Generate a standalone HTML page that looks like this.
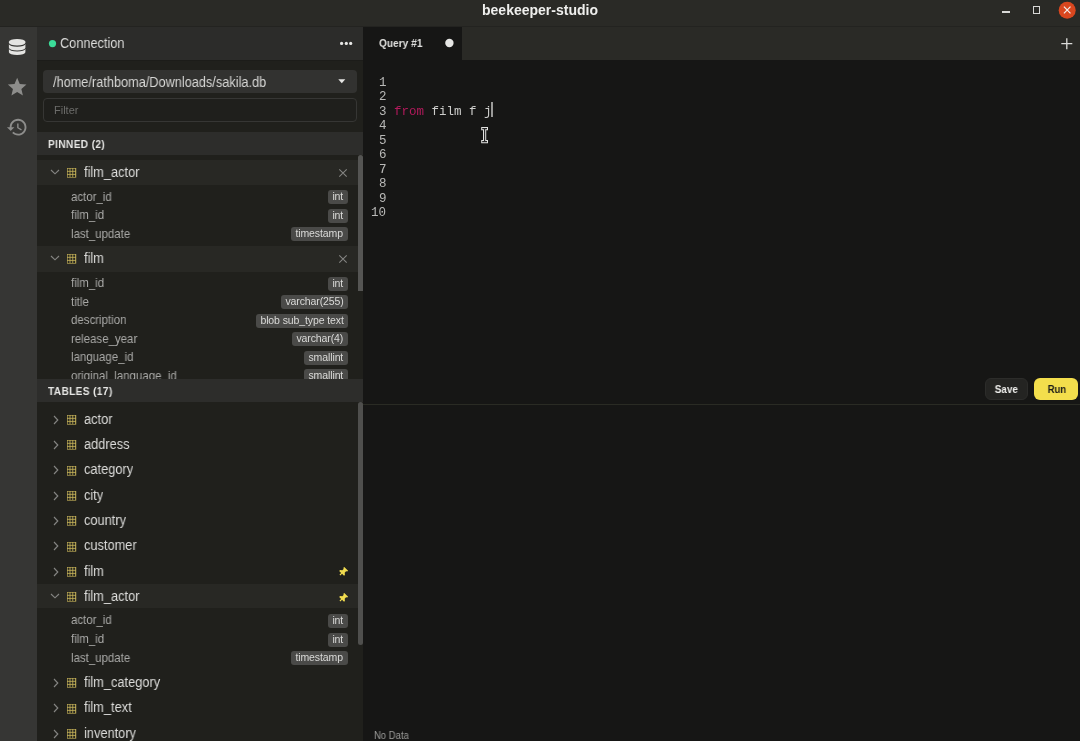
<!DOCTYPE html>
<html><head><meta charset="utf-8">
<style>
*{box-sizing:border-box;margin:0;padding:0}
html,body{width:1080px;height:741px;overflow:hidden;background:#171716;font-family:"Liberation Sans",sans-serif}
.a{position:absolute;white-space:pre}
.t{will-change:transform}
svg.a{overflow:visible}
</style></head><body>
<div class="a" style="left:0px;top:0px;width:1080px;height:27px;background:#2a2a26;"></div>
<div class="a" style="left:0px;top:26px;width:1080px;height:1px;background:#232320;"></div>
<div class="a t" style="left:390.00px;width:300px;top:1.05px;font-size:14px;line-height:18px;color:#efefed;font-weight:bold;font-family:'Liberation Sans',sans-serif;text-align:center;">beekeeper-studio</div>
<div class="a" style="left:1002px;top:11.3px;width:7.8px;height:1.6px;background:#d8d8d6;"></div>
<div class="a" style="left:1033px;top:6px;width:7.4px;height:8px;border:1.4px solid #d8d8d6"></div>
<svg class="a" style="left:1058px;top:1px" width="18" height="18" viewBox="0 0 18 18"><circle cx="9.2" cy="9.2" r="8.5" fill="#d9471f"/><path d="M5.9 5.7 L12.5 12.3 M12.5 5.7 L5.9 12.3" stroke="#f4f0ee" stroke-width="1.2"/></svg>
<div class="a" style="left:0px;top:27px;width:37px;height:714px;background:#363634;"></div>
<svg class="a" style="left:8px;top:38px" width="19" height="19" viewBox="0 0 19 19"><g fill="#e4e4e2"><path d="M0.9 3.7 A8.25 2.8 0 0 1 17.4 3.7 V4.8 A8.25 2.8 0 0 1 0.9 4.8 Z"/><path d="M0.9 5.9 A8.25 2.8 0 0 0 17.4 5.9 V9.7 A8.25 2.8 0 0 1 0.9 9.7 Z"/><path d="M0.9 10.8 A8.25 2.8 0 0 0 17.4 10.8 V14.2 A8.25 2.8 0 0 1 0.9 14.2 Z"/></g></svg>
<svg class="a" style="left:6.0px;top:75.6px" width="22" height="22" viewBox="0 0 22 22"><path transform="scale(0.93)" fill="#8d8d8b" d="M12 17.27L18.18 21l-1.64-7.03L22 9.24l-7.19-.61L12 2 9.19 8.63 2 9.24l5.46 4.73L5.82 21z"/></svg>
<svg class="a" style="left:6.4px;top:115.8px" width="22" height="22" viewBox="0 0 22 22"><path transform="scale(0.93)" fill="#8d8d8b" d="M13 3c-4.97 0-9 4.03-9 9H1l3.89 3.89.07.14L9 12H6c0-3.870 3.13-7 7-7s7 3.13 7 7-3.13 7-7 7c-1.93 0-3.68-.79-4.94-2.06l-1.42 1.42C8.27 19.99 10.51 21 13 21c4.97 0 9-4.03 9-9s-4.03-9-9-9zm-1 5v5l4.28 2.54.72-1.210-3.5-2.08V8H12z"/></svg>
<div class="a" style="left:37px;top:27px;width:326px;height:714px;background:#20201c;"></div>
<div class="a" style="left:37px;top:27px;width:326px;height:33px;background:#2c2c2a;"></div>
<div class="a" style="left:37px;top:60px;width:326px;height:1px;background:#1c1c19;"></div>
<svg class="a" style="left:48px;top:39px" width="9" height="9" viewBox="0 0 9 9"><circle cx="4.5" cy="4.6" r="3.6" fill="#3bdc98"/></svg>
<div class="a t" style="left:60.30px;top:34.15px;font-size:14px;line-height:18px;color:#dcdcda;font-weight:normal;font-family:'Liberation Sans',sans-serif;transform:scaleX(0.91);transform-origin:left 0;">Connection</div>
<svg class="a" style="left:338px;top:40px" width="16" height="8" viewBox="0 0 16 8"><g fill="#e8e8e6"><circle cx="3.6" cy="3.4" r="1.6"/><circle cx="8.3" cy="3.4" r="1.6"/><circle cx="12.7" cy="3.4" r="1.6"/></g></svg>
<div class="a" style="left:43px;top:70px;width:313.5px;height:23px;background:#323230;border-radius:4px;"></div>
<div class="a t" style="left:52.50px;top:72.55px;font-size:14px;line-height:18px;color:#d7d7d5;font-weight:normal;font-family:'Liberation Sans',sans-serif;transform:scaleX(0.91);transform-origin:left 0;">/home/rathboma/Downloads/sakila.db</div>
<svg class="a" style="left:337.5px;top:79px" width="8" height="5" viewBox="0 0 8 5"><path d="M0.3 0.3 L7.3 0.3 L3.8 4.2 Z" fill="#e6e6e4"/></svg>
<div class="a" style="left:43px;top:98.3px;width:313.5px;height:23.6px;border:1px solid #363634;border-radius:4px;background:#1f1f1c"></div>
<div class="a t" style="left:53.80px;top:102.99px;font-size:11px;line-height:14px;color:#6c6c6a;font-weight:normal;font-family:'Liberation Sans',sans-serif;">Filter</div>
<div class="a" style="left:37px;top:132px;width:326px;height:23px;background:#2d2d2b;"></div>
<div class="a t" style="left:47.60px;top:136.99px;font-size:11px;line-height:14px;color:#e6e6e4;font-weight:bold;font-family:'Liberation Sans',sans-serif;letter-spacing:0.4px;transform:scaleX(0.92);transform-origin:left 0;">PINNED (2)</div>
<div class="a" style="left:37px;top:155px;width:326px;height:224px;overflow:hidden">
<div class="a" style="left:-37px;top:-155px;width:1080px;height:741px">
<div class="a" style="left:37px;top:159.7px;width:321px;height:25.80000000000001px;background:#282824;"></div>
<svg class="a" style="left:50.1px;top:169.25px" width="10" height="6" viewBox="0 0 10 6"><path d="M1.0 1.0 L5 4.8 L9.0 1.0" fill="none" stroke="#858583" stroke-width="1.15"/></svg>
<svg class="a" style="left:67.0px;top:167.79999999999998px" width="10" height="10" viewBox="0 0 10 10"><rect x="0" y="0" width="9.2" height="9.6" fill="#c9b55a"/><g fill="#26261f"><rect x="0.60" y="0.60" width="2.0" height="2.27"/><rect x="0.60" y="3.67" width="2.0" height="2.27"/><rect x="0.60" y="6.74" width="2.0" height="2.27"/><rect x="3.40" y="0.60" width="2.0" height="2.27"/><rect x="3.40" y="3.67" width="2.0" height="2.27"/><rect x="3.40" y="6.74" width="2.0" height="2.27"/><rect x="6.20" y="0.60" width="2.0" height="2.27"/><rect x="6.20" y="3.67" width="2.0" height="2.27"/><rect x="6.20" y="6.74" width="2.0" height="2.27"/></g></svg>
<div class="a t" style="left:84.00px;top:162.65px;font-size:14px;line-height:18px;color:#dcdcda;font-weight:normal;font-family:'Liberation Sans',sans-serif;transform:scaleX(0.915);transform-origin:left 0;">film_actor</div>
<svg class="a" style="left:337.8px;top:167.7px" width="10" height="10" viewBox="0 0 10 10"><path d="M1.3 1.3 L8.7 8.7 M8.7 1.3 L1.3 8.7" stroke="#858583" stroke-width="1.05"/></svg>
<div class="a t" style="left:71.20px;top:188.77px;font-size:12.2px;line-height:16px;color:#a9a9a7;font-weight:normal;font-family:'Liberation Sans',sans-serif;transform:scaleX(0.94);transform-origin:left 0;">actor_id</div>
<div class="a t" style="right:732px;top:190.40px;height:13.6px;padding:0 4.6px 0 4.4px;background:#4a4a48;border-radius:3px;font-size:10.5px;line-height:13.6px;color:#dadad8;letter-spacing:-0.1px">int</div>
<div class="a t" style="left:71.20px;top:207.27px;font-size:12.2px;line-height:16px;color:#a9a9a7;font-weight:normal;font-family:'Liberation Sans',sans-serif;transform:scaleX(0.94);transform-origin:left 0;">film_id</div>
<div class="a t" style="right:732px;top:208.90px;height:13.6px;padding:0 4.6px 0 4.4px;background:#4a4a48;border-radius:3px;font-size:10.5px;line-height:13.6px;color:#dadad8;letter-spacing:-0.1px">int</div>
<div class="a t" style="left:71.20px;top:225.77px;font-size:12.2px;line-height:16px;color:#a9a9a7;font-weight:normal;font-family:'Liberation Sans',sans-serif;transform:scaleX(0.94);transform-origin:left 0;">last_update</div>
<div class="a t" style="right:732px;top:227.40px;height:13.6px;padding:0 4.6px 0 4.4px;background:#4a4a48;border-radius:3px;font-size:10.5px;line-height:13.6px;color:#dadad8;letter-spacing:-0.1px">timestamp</div>
<div class="a" style="left:37px;top:246px;width:321px;height:25.5px;background:#282824;"></div>
<svg class="a" style="left:50.1px;top:255.14999999999998px" width="10" height="6" viewBox="0 0 10 6"><path d="M1.0 1.0 L5 4.8 L9.0 1.0" fill="none" stroke="#858583" stroke-width="1.15"/></svg>
<svg class="a" style="left:67.0px;top:253.7px" width="10" height="10" viewBox="0 0 10 10"><rect x="0" y="0" width="9.2" height="9.6" fill="#c9b55a"/><g fill="#26261f"><rect x="0.60" y="0.60" width="2.0" height="2.27"/><rect x="0.60" y="3.67" width="2.0" height="2.27"/><rect x="0.60" y="6.74" width="2.0" height="2.27"/><rect x="3.40" y="0.60" width="2.0" height="2.27"/><rect x="3.40" y="3.67" width="2.0" height="2.27"/><rect x="3.40" y="6.74" width="2.0" height="2.27"/><rect x="6.20" y="0.60" width="2.0" height="2.27"/><rect x="6.20" y="3.67" width="2.0" height="2.27"/><rect x="6.20" y="6.74" width="2.0" height="2.27"/></g></svg>
<div class="a t" style="left:84.00px;top:248.55px;font-size:14px;line-height:18px;color:#dcdcda;font-weight:normal;font-family:'Liberation Sans',sans-serif;transform:scaleX(0.915);transform-origin:left 0;">film</div>
<svg class="a" style="left:337.8px;top:253.59999999999997px" width="10" height="10" viewBox="0 0 10 10"><path d="M1.3 1.3 L8.7 8.7 M8.7 1.3 L1.3 8.7" stroke="#858583" stroke-width="1.05"/></svg>
<div class="a t" style="left:71.20px;top:275.17px;font-size:12.2px;line-height:16px;color:#a9a9a7;font-weight:normal;font-family:'Liberation Sans',sans-serif;transform:scaleX(0.94);transform-origin:left 0;">film_id</div>
<div class="a t" style="right:732px;top:276.80px;height:13.6px;padding:0 4.6px 0 4.4px;background:#4a4a48;border-radius:3px;font-size:10.5px;line-height:13.6px;color:#dadad8;letter-spacing:-0.1px">int</div>
<div class="a t" style="left:71.20px;top:293.67px;font-size:12.2px;line-height:16px;color:#a9a9a7;font-weight:normal;font-family:'Liberation Sans',sans-serif;transform:scaleX(0.94);transform-origin:left 0;">title</div>
<div class="a t" style="right:732px;top:295.30px;height:13.6px;padding:0 4.6px 0 4.4px;background:#4a4a48;border-radius:3px;font-size:10.5px;line-height:13.6px;color:#dadad8;letter-spacing:-0.1px">varchar(255)</div>
<div class="a t" style="left:71.20px;top:312.17px;font-size:12.2px;line-height:16px;color:#a9a9a7;font-weight:normal;font-family:'Liberation Sans',sans-serif;transform:scaleX(0.94);transform-origin:left 0;">description</div>
<div class="a t" style="right:732px;top:313.80px;height:13.6px;padding:0 4.6px 0 4.4px;background:#4a4a48;border-radius:3px;font-size:10.5px;line-height:13.6px;color:#dadad8;letter-spacing:-0.1px">blob sub_type text</div>
<div class="a t" style="left:71.20px;top:330.67px;font-size:12.2px;line-height:16px;color:#a9a9a7;font-weight:normal;font-family:'Liberation Sans',sans-serif;transform:scaleX(0.94);transform-origin:left 0;">release_year</div>
<div class="a t" style="right:732px;top:332.30px;height:13.6px;padding:0 4.6px 0 4.4px;background:#4a4a48;border-radius:3px;font-size:10.5px;line-height:13.6px;color:#dadad8;letter-spacing:-0.1px">varchar(4)</div>
<div class="a t" style="left:71.20px;top:349.17px;font-size:12.2px;line-height:16px;color:#a9a9a7;font-weight:normal;font-family:'Liberation Sans',sans-serif;transform:scaleX(0.94);transform-origin:left 0;">language_id</div>
<div class="a t" style="right:732px;top:350.80px;height:13.6px;padding:0 4.6px 0 4.4px;background:#4a4a48;border-radius:3px;font-size:10.5px;line-height:13.6px;color:#dadad8;letter-spacing:-0.1px">smallint</div>
<div class="a t" style="left:71.20px;top:367.67px;font-size:12.2px;line-height:16px;color:#a9a9a7;font-weight:normal;font-family:'Liberation Sans',sans-serif;transform:scaleX(0.94);transform-origin:left 0;">original_language_id</div>
<div class="a t" style="right:732px;top:369.30px;height:13.6px;padding:0 4.6px 0 4.4px;background:#4a4a48;border-radius:3px;font-size:10.5px;line-height:13.6px;color:#dadad8;letter-spacing:-0.1px">smallint</div>
</div></div>
<div class="a" style="left:358px;top:155px;width:5px;height:135.5px;background:#555553;border-radius:2.5px 2.5px 0 0;"></div>
<div class="a" style="left:37px;top:379px;width:326px;height:22.5px;background:#2d2d2b;"></div>
<div class="a t" style="left:47.60px;top:383.79px;font-size:11px;line-height:14px;color:#e6e6e4;font-weight:bold;font-family:'Liberation Sans',sans-serif;letter-spacing:0.4px;transform:scaleX(0.92);transform-origin:left 0;">TABLES (17)</div>
<svg class="a" style="left:52.5px;top:414.8px" width="6" height="10" viewBox="0 0 6 10"><path d="M1.0 1.0 L4.8 5 L1.0 9.0" fill="none" stroke="#858583" stroke-width="1.15"/></svg>
<svg class="a" style="left:67.0px;top:414.90000000000003px" width="10" height="10" viewBox="0 0 10 10"><rect x="0" y="0" width="9.2" height="9.6" fill="#c9b55a"/><g fill="#26261f"><rect x="0.60" y="0.60" width="2.0" height="2.27"/><rect x="0.60" y="3.67" width="2.0" height="2.27"/><rect x="0.60" y="6.74" width="2.0" height="2.27"/><rect x="3.40" y="0.60" width="2.0" height="2.27"/><rect x="3.40" y="3.67" width="2.0" height="2.27"/><rect x="3.40" y="6.74" width="2.0" height="2.27"/><rect x="6.20" y="0.60" width="2.0" height="2.27"/><rect x="6.20" y="3.67" width="2.0" height="2.27"/><rect x="6.20" y="6.74" width="2.0" height="2.27"/></g></svg>
<div class="a t" style="left:84.00px;top:409.75px;font-size:14px;line-height:18px;color:#dcdcda;font-weight:normal;font-family:'Liberation Sans',sans-serif;transform:scaleX(0.915);transform-origin:left 0;">actor</div>
<svg class="a" style="left:52.5px;top:440.13px" width="6" height="10" viewBox="0 0 6 10"><path d="M1.0 1.0 L4.8 5 L1.0 9.0" fill="none" stroke="#858583" stroke-width="1.15"/></svg>
<svg class="a" style="left:67.0px;top:440.23px" width="10" height="10" viewBox="0 0 10 10"><rect x="0" y="0" width="9.2" height="9.6" fill="#c9b55a"/><g fill="#26261f"><rect x="0.60" y="0.60" width="2.0" height="2.27"/><rect x="0.60" y="3.67" width="2.0" height="2.27"/><rect x="0.60" y="6.74" width="2.0" height="2.27"/><rect x="3.40" y="0.60" width="2.0" height="2.27"/><rect x="3.40" y="3.67" width="2.0" height="2.27"/><rect x="3.40" y="6.74" width="2.0" height="2.27"/><rect x="6.20" y="0.60" width="2.0" height="2.27"/><rect x="6.20" y="3.67" width="2.0" height="2.27"/><rect x="6.20" y="6.74" width="2.0" height="2.27"/></g></svg>
<div class="a t" style="left:84.00px;top:435.08px;font-size:14px;line-height:18px;color:#dcdcda;font-weight:normal;font-family:'Liberation Sans',sans-serif;transform:scaleX(0.915);transform-origin:left 0;">address</div>
<svg class="a" style="left:52.5px;top:465.46px" width="6" height="10" viewBox="0 0 6 10"><path d="M1.0 1.0 L4.8 5 L1.0 9.0" fill="none" stroke="#858583" stroke-width="1.15"/></svg>
<svg class="a" style="left:67.0px;top:465.56px" width="10" height="10" viewBox="0 0 10 10"><rect x="0" y="0" width="9.2" height="9.6" fill="#c9b55a"/><g fill="#26261f"><rect x="0.60" y="0.60" width="2.0" height="2.27"/><rect x="0.60" y="3.67" width="2.0" height="2.27"/><rect x="0.60" y="6.74" width="2.0" height="2.27"/><rect x="3.40" y="0.60" width="2.0" height="2.27"/><rect x="3.40" y="3.67" width="2.0" height="2.27"/><rect x="3.40" y="6.74" width="2.0" height="2.27"/><rect x="6.20" y="0.60" width="2.0" height="2.27"/><rect x="6.20" y="3.67" width="2.0" height="2.27"/><rect x="6.20" y="6.74" width="2.0" height="2.27"/></g></svg>
<div class="a t" style="left:84.00px;top:460.41px;font-size:14px;line-height:18px;color:#dcdcda;font-weight:normal;font-family:'Liberation Sans',sans-serif;transform:scaleX(0.915);transform-origin:left 0;">category</div>
<svg class="a" style="left:52.5px;top:490.79px" width="6" height="10" viewBox="0 0 6 10"><path d="M1.0 1.0 L4.8 5 L1.0 9.0" fill="none" stroke="#858583" stroke-width="1.15"/></svg>
<svg class="a" style="left:67.0px;top:490.89000000000004px" width="10" height="10" viewBox="0 0 10 10"><rect x="0" y="0" width="9.2" height="9.6" fill="#c9b55a"/><g fill="#26261f"><rect x="0.60" y="0.60" width="2.0" height="2.27"/><rect x="0.60" y="3.67" width="2.0" height="2.27"/><rect x="0.60" y="6.74" width="2.0" height="2.27"/><rect x="3.40" y="0.60" width="2.0" height="2.27"/><rect x="3.40" y="3.67" width="2.0" height="2.27"/><rect x="3.40" y="6.74" width="2.0" height="2.27"/><rect x="6.20" y="0.60" width="2.0" height="2.27"/><rect x="6.20" y="3.67" width="2.0" height="2.27"/><rect x="6.20" y="6.74" width="2.0" height="2.27"/></g></svg>
<div class="a t" style="left:84.00px;top:485.74px;font-size:14px;line-height:18px;color:#dcdcda;font-weight:normal;font-family:'Liberation Sans',sans-serif;transform:scaleX(0.915);transform-origin:left 0;">city</div>
<svg class="a" style="left:52.5px;top:516.1200000000001px" width="6" height="10" viewBox="0 0 6 10"><path d="M1.0 1.0 L4.8 5 L1.0 9.0" fill="none" stroke="#858583" stroke-width="1.15"/></svg>
<svg class="a" style="left:67.0px;top:516.2200000000001px" width="10" height="10" viewBox="0 0 10 10"><rect x="0" y="0" width="9.2" height="9.6" fill="#c9b55a"/><g fill="#26261f"><rect x="0.60" y="0.60" width="2.0" height="2.27"/><rect x="0.60" y="3.67" width="2.0" height="2.27"/><rect x="0.60" y="6.74" width="2.0" height="2.27"/><rect x="3.40" y="0.60" width="2.0" height="2.27"/><rect x="3.40" y="3.67" width="2.0" height="2.27"/><rect x="3.40" y="6.74" width="2.0" height="2.27"/><rect x="6.20" y="0.60" width="2.0" height="2.27"/><rect x="6.20" y="3.67" width="2.0" height="2.27"/><rect x="6.20" y="6.74" width="2.0" height="2.27"/></g></svg>
<div class="a t" style="left:84.00px;top:511.07px;font-size:14px;line-height:18px;color:#dcdcda;font-weight:normal;font-family:'Liberation Sans',sans-serif;transform:scaleX(0.915);transform-origin:left 0;">country</div>
<svg class="a" style="left:52.5px;top:541.45px" width="6" height="10" viewBox="0 0 6 10"><path d="M1.0 1.0 L4.8 5 L1.0 9.0" fill="none" stroke="#858583" stroke-width="1.15"/></svg>
<svg class="a" style="left:67.0px;top:541.5500000000001px" width="10" height="10" viewBox="0 0 10 10"><rect x="0" y="0" width="9.2" height="9.6" fill="#c9b55a"/><g fill="#26261f"><rect x="0.60" y="0.60" width="2.0" height="2.27"/><rect x="0.60" y="3.67" width="2.0" height="2.27"/><rect x="0.60" y="6.74" width="2.0" height="2.27"/><rect x="3.40" y="0.60" width="2.0" height="2.27"/><rect x="3.40" y="3.67" width="2.0" height="2.27"/><rect x="3.40" y="6.74" width="2.0" height="2.27"/><rect x="6.20" y="0.60" width="2.0" height="2.27"/><rect x="6.20" y="3.67" width="2.0" height="2.27"/><rect x="6.20" y="6.74" width="2.0" height="2.27"/></g></svg>
<div class="a t" style="left:84.00px;top:536.40px;font-size:14px;line-height:18px;color:#dcdcda;font-weight:normal;font-family:'Liberation Sans',sans-serif;transform:scaleX(0.915);transform-origin:left 0;">customer</div>
<svg class="a" style="left:52.5px;top:566.7800000000001px" width="6" height="10" viewBox="0 0 6 10"><path d="M1.0 1.0 L4.8 5 L1.0 9.0" fill="none" stroke="#858583" stroke-width="1.15"/></svg>
<svg class="a" style="left:67.0px;top:566.8800000000001px" width="10" height="10" viewBox="0 0 10 10"><rect x="0" y="0" width="9.2" height="9.6" fill="#c9b55a"/><g fill="#26261f"><rect x="0.60" y="0.60" width="2.0" height="2.27"/><rect x="0.60" y="3.67" width="2.0" height="2.27"/><rect x="0.60" y="6.74" width="2.0" height="2.27"/><rect x="3.40" y="0.60" width="2.0" height="2.27"/><rect x="3.40" y="3.67" width="2.0" height="2.27"/><rect x="3.40" y="6.74" width="2.0" height="2.27"/><rect x="6.20" y="0.60" width="2.0" height="2.27"/><rect x="6.20" y="3.67" width="2.0" height="2.27"/><rect x="6.20" y="6.74" width="2.0" height="2.27"/></g></svg>
<div class="a t" style="left:84.00px;top:561.73px;font-size:14px;line-height:18px;color:#dcdcda;font-weight:normal;font-family:'Liberation Sans',sans-serif;transform:scaleX(0.915);transform-origin:left 0;">film</div>
<svg class="a" style="left:336.9px;top:566.48px" width="12" height="12" viewBox="0 0 12 12"><g transform="translate(6 6) rotate(45) scale(0.9) translate(-6 -5.6)" fill="#f1dc4f"><path d="M3.0 0.6 H9.0 V2.0 L7.9 2.7 V4.8 L9.8 6.4 V7.8 H6.7 V10.4 H5.3 V7.8 H2.2 V6.4 L4.1 4.8 V2.7 L3.0 2.0 Z"/></g></svg>
<div class="a" style="left:37px;top:583.6px;width:321px;height:24.799999999999955px;background:#282824;"></div>
<svg class="a" style="left:50.1px;top:593.35px" width="10" height="6" viewBox="0 0 10 6"><path d="M1.0 1.0 L5 4.8 L9.0 1.0" fill="none" stroke="#858583" stroke-width="1.15"/></svg>
<svg class="a" style="left:67.0px;top:591.9000000000001px" width="10" height="10" viewBox="0 0 10 10"><rect x="0" y="0" width="9.2" height="9.6" fill="#c9b55a"/><g fill="#26261f"><rect x="0.60" y="0.60" width="2.0" height="2.27"/><rect x="0.60" y="3.67" width="2.0" height="2.27"/><rect x="0.60" y="6.74" width="2.0" height="2.27"/><rect x="3.40" y="0.60" width="2.0" height="2.27"/><rect x="3.40" y="3.67" width="2.0" height="2.27"/><rect x="3.40" y="6.74" width="2.0" height="2.27"/><rect x="6.20" y="0.60" width="2.0" height="2.27"/><rect x="6.20" y="3.67" width="2.0" height="2.27"/><rect x="6.20" y="6.74" width="2.0" height="2.27"/></g></svg>
<div class="a t" style="left:84.00px;top:586.75px;font-size:14px;line-height:18px;color:#dcdcda;font-weight:normal;font-family:'Liberation Sans',sans-serif;transform:scaleX(0.915);transform-origin:left 0;">film_actor</div>
<svg class="a" style="left:336.9px;top:591.5px" width="12" height="12" viewBox="0 0 12 12"><g transform="translate(6 6) rotate(45) scale(0.9) translate(-6 -5.6)" fill="#f1dc4f"><path d="M3.0 0.6 H9.0 V2.0 L7.9 2.7 V4.8 L9.8 6.4 V7.8 H6.7 V10.4 H5.3 V7.8 H2.2 V6.4 L4.1 4.8 V2.7 L3.0 2.0 Z"/></g></svg>
<div class="a t" style="left:71.20px;top:612.17px;font-size:12.2px;line-height:16px;color:#a9a9a7;font-weight:normal;font-family:'Liberation Sans',sans-serif;transform:scaleX(0.94);transform-origin:left 0;">actor_id</div>
<div class="a t" style="right:732px;top:613.80px;height:13.6px;padding:0 4.6px 0 4.4px;background:#4a4a48;border-radius:3px;font-size:10.5px;line-height:13.6px;color:#dadad8;letter-spacing:-0.1px">int</div>
<div class="a t" style="left:71.20px;top:630.97px;font-size:12.2px;line-height:16px;color:#a9a9a7;font-weight:normal;font-family:'Liberation Sans',sans-serif;transform:scaleX(0.94);transform-origin:left 0;">film_id</div>
<div class="a t" style="right:732px;top:632.60px;height:13.6px;padding:0 4.6px 0 4.4px;background:#4a4a48;border-radius:3px;font-size:10.5px;line-height:13.6px;color:#dadad8;letter-spacing:-0.1px">int</div>
<div class="a t" style="left:71.20px;top:649.77px;font-size:12.2px;line-height:16px;color:#a9a9a7;font-weight:normal;font-family:'Liberation Sans',sans-serif;transform:scaleX(0.94);transform-origin:left 0;">last_update</div>
<div class="a t" style="right:732px;top:651.40px;height:13.6px;padding:0 4.6px 0 4.4px;background:#4a4a48;border-radius:3px;font-size:10.5px;line-height:13.6px;color:#dadad8;letter-spacing:-0.1px">timestamp</div>
<svg class="a" style="left:52.5px;top:678.2px" width="6" height="10" viewBox="0 0 6 10"><path d="M1.0 1.0 L4.8 5 L1.0 9.0" fill="none" stroke="#858583" stroke-width="1.15"/></svg>
<svg class="a" style="left:67.0px;top:678.3000000000001px" width="10" height="10" viewBox="0 0 10 10"><rect x="0" y="0" width="9.2" height="9.6" fill="#c9b55a"/><g fill="#26261f"><rect x="0.60" y="0.60" width="2.0" height="2.27"/><rect x="0.60" y="3.67" width="2.0" height="2.27"/><rect x="0.60" y="6.74" width="2.0" height="2.27"/><rect x="3.40" y="0.60" width="2.0" height="2.27"/><rect x="3.40" y="3.67" width="2.0" height="2.27"/><rect x="3.40" y="6.74" width="2.0" height="2.27"/><rect x="6.20" y="0.60" width="2.0" height="2.27"/><rect x="6.20" y="3.67" width="2.0" height="2.27"/><rect x="6.20" y="6.74" width="2.0" height="2.27"/></g></svg>
<div class="a t" style="left:84.00px;top:673.15px;font-size:14px;line-height:18px;color:#dcdcda;font-weight:normal;font-family:'Liberation Sans',sans-serif;transform:scaleX(0.915);transform-origin:left 0;">film_category</div>
<svg class="a" style="left:52.5px;top:703.4000000000001px" width="6" height="10" viewBox="0 0 6 10"><path d="M1.0 1.0 L4.8 5 L1.0 9.0" fill="none" stroke="#858583" stroke-width="1.15"/></svg>
<svg class="a" style="left:67.0px;top:703.5000000000001px" width="10" height="10" viewBox="0 0 10 10"><rect x="0" y="0" width="9.2" height="9.6" fill="#c9b55a"/><g fill="#26261f"><rect x="0.60" y="0.60" width="2.0" height="2.27"/><rect x="0.60" y="3.67" width="2.0" height="2.27"/><rect x="0.60" y="6.74" width="2.0" height="2.27"/><rect x="3.40" y="0.60" width="2.0" height="2.27"/><rect x="3.40" y="3.67" width="2.0" height="2.27"/><rect x="3.40" y="6.74" width="2.0" height="2.27"/><rect x="6.20" y="0.60" width="2.0" height="2.27"/><rect x="6.20" y="3.67" width="2.0" height="2.27"/><rect x="6.20" y="6.74" width="2.0" height="2.27"/></g></svg>
<div class="a t" style="left:84.00px;top:698.35px;font-size:14px;line-height:18px;color:#dcdcda;font-weight:normal;font-family:'Liberation Sans',sans-serif;transform:scaleX(0.915);transform-origin:left 0;">film_text</div>
<svg class="a" style="left:52.5px;top:728.6px" width="6" height="10" viewBox="0 0 6 10"><path d="M1.0 1.0 L4.8 5 L1.0 9.0" fill="none" stroke="#858583" stroke-width="1.15"/></svg>
<svg class="a" style="left:67.0px;top:728.7px" width="10" height="10" viewBox="0 0 10 10"><rect x="0" y="0" width="9.2" height="9.6" fill="#c9b55a"/><g fill="#26261f"><rect x="0.60" y="0.60" width="2.0" height="2.27"/><rect x="0.60" y="3.67" width="2.0" height="2.27"/><rect x="0.60" y="6.74" width="2.0" height="2.27"/><rect x="3.40" y="0.60" width="2.0" height="2.27"/><rect x="3.40" y="3.67" width="2.0" height="2.27"/><rect x="3.40" y="6.74" width="2.0" height="2.27"/><rect x="6.20" y="0.60" width="2.0" height="2.27"/><rect x="6.20" y="3.67" width="2.0" height="2.27"/><rect x="6.20" y="6.74" width="2.0" height="2.27"/></g></svg>
<div class="a t" style="left:84.00px;top:723.55px;font-size:14px;line-height:18px;color:#dcdcda;font-weight:normal;font-family:'Liberation Sans',sans-serif;transform:scaleX(0.915);transform-origin:left 0;">inventory</div>
<div class="a" style="left:358px;top:401.5px;width:5px;height:243.2px;background:#4f4f4d;border-radius:2.5px;"></div>
<div class="a" style="left:363px;top:27px;width:717px;height:714px;background:#161615;"></div>
<div class="a" style="left:363px;top:27px;width:717px;height:33px;background:#2a2a26;"></div>
<div class="a" style="left:363px;top:27px;width:99px;height:33px;background:#161615;"></div>
<div class="a t" style="left:378.60px;top:35.48px;font-size:11.6px;line-height:15px;color:#e0e0de;font-weight:bold;font-family:'Liberation Sans',sans-serif;transform:scaleX(0.875);transform-origin:left 0;">Query #1</div>
<svg class="a" style="left:445px;top:39px" width="9" height="9" viewBox="0 0 9 9"><circle cx="4.4" cy="4" r="4.2" fill="#e6e6e4"/></svg>
<svg class="a" style="left:1060px;top:37px" width="14" height="14" viewBox="0 0 14 14"><path d="M6.8 1.2 V12.2 M1.3 6.6 H12.3" stroke="#dcdcda" stroke-width="1.3"/></svg>
<div class="a t" style="right:693.50px;top:74.67px;font-size:12.5px;line-height:16px;color:#b9b9b7;font-weight:normal;font-family:'Liberation Mono',monospace;text-align:right;">1</div>
<div class="a t" style="right:693.50px;top:89.17px;font-size:12.5px;line-height:16px;color:#b9b9b7;font-weight:normal;font-family:'Liberation Mono',monospace;text-align:right;">2</div>
<div class="a t" style="right:693.50px;top:103.67px;font-size:12.5px;line-height:16px;color:#b9b9b7;font-weight:normal;font-family:'Liberation Mono',monospace;text-align:right;">3</div>
<div class="a t" style="right:693.50px;top:118.17px;font-size:12.5px;line-height:16px;color:#b9b9b7;font-weight:normal;font-family:'Liberation Mono',monospace;text-align:right;">4</div>
<div class="a t" style="right:693.50px;top:132.67px;font-size:12.5px;line-height:16px;color:#b9b9b7;font-weight:normal;font-family:'Liberation Mono',monospace;text-align:right;">5</div>
<div class="a t" style="right:693.50px;top:147.17px;font-size:12.5px;line-height:16px;color:#b9b9b7;font-weight:normal;font-family:'Liberation Mono',monospace;text-align:right;">6</div>
<div class="a t" style="right:693.50px;top:161.67px;font-size:12.5px;line-height:16px;color:#b9b9b7;font-weight:normal;font-family:'Liberation Mono',monospace;text-align:right;">7</div>
<div class="a t" style="right:693.50px;top:176.17px;font-size:12.5px;line-height:16px;color:#b9b9b7;font-weight:normal;font-family:'Liberation Mono',monospace;text-align:right;">8</div>
<div class="a t" style="right:693.50px;top:190.67px;font-size:12.5px;line-height:16px;color:#b9b9b7;font-weight:normal;font-family:'Liberation Mono',monospace;text-align:right;">9</div>
<div class="a t" style="right:693.50px;top:205.17px;font-size:12.5px;line-height:16px;color:#b9b9b7;font-weight:normal;font-family:'Liberation Mono',monospace;text-align:right;">10</div>
<div class="a t" style="left:393.70px;top:103.67px;font-size:12.5px;line-height:16px;color:#cdcdcb;font-weight:normal;font-family:'Liberation Mono',monospace;"><span style="color:#b31a5c">from</span> film f j</div>
<div class="a" style="left:491.3px;top:102px;width:1.6px;height:15px;background:#9a9a98;"></div>
<svg class="a" style="left:480px;top:126px" width="10" height="18" viewBox="0 0 10 18"><path d="M1.2 1 H8 V4.2 H6.2 V14 H8 V17.2 H1.2 V14 H3.0 V4.2 H1.2 Z" fill="#e2e2e0"/><path d="M2.2 2 H7 V3.2 H5.2 V15 H7 V16.2 H2.2 V15 H4.0 V3.2 H2.2 Z" fill="#262626"/></svg>
<div class="a" style="left:985.3px;top:378px;width:42.7px;height:22px;background:#242422;border-radius:6px;border:1px solid #2c2c2a;"></div>
<div class="a t" style="left:985.45px;width:42.7px;top:382.01px;font-size:11.5px;line-height:15px;color:#ececea;font-weight:bold;font-family:'Liberation Sans',sans-serif;text-align:center;transform:scaleX(0.87);transform-origin:center 0;">Save</div>
<div class="a" style="left:1034.2px;top:378px;width:43.8px;height:22px;background:#f3de4c;border-radius:6px;"></div>
<div class="a t" style="left:1035.00px;width:43.8px;top:382.01px;font-size:11.5px;line-height:15px;color:#1d1d19;font-weight:bold;font-family:'Liberation Sans',sans-serif;text-align:center;transform:scaleX(0.83);transform-origin:center 0;">Run</div>
<div class="a" style="left:363px;top:403.8px;width:717px;height:1.3px;background:#2a2b24;"></div>
<div class="a t" style="left:373.60px;top:729.16px;font-size:10.2px;line-height:13px;color:#9c9c9a;font-weight:normal;font-family:'Liberation Sans',sans-serif;transform:scaleX(0.93);transform-origin:left 0;">No Data</div>
</body></html>
